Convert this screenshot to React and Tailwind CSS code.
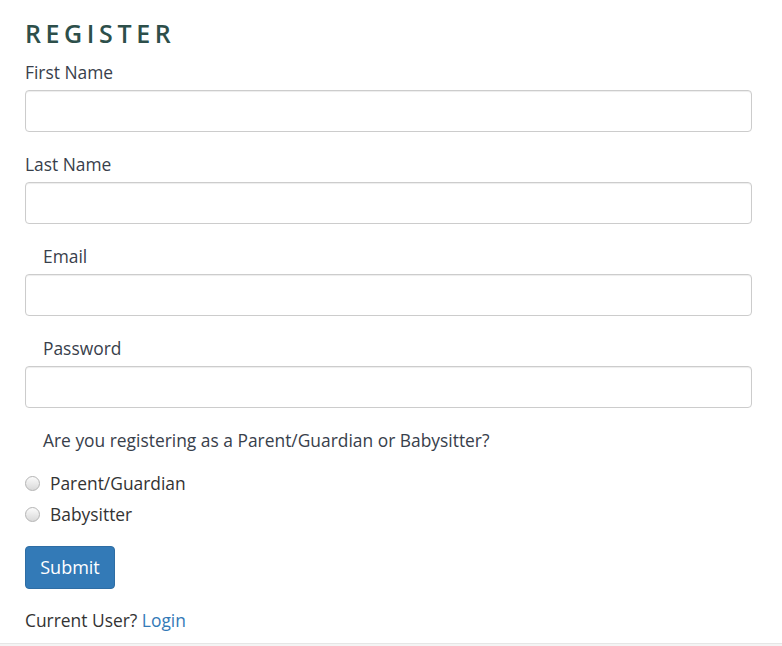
import React, { useState } from "react";

const Field = ({ label, type = "text", indent }) => (
  <div className="mb-5">
    <label className={`block h-6 leading-6 mb-[6px] text-[#38404b] ${indent ? "pl-[18px]" : ""}`}>{label}</label>
    <input
      type={type}
      className="block w-[727px] h-[42px] rounded border border-[#cccccc] bg-white px-3 shadow-[inset_0_1px_1px_rgba(0,0,0,0.075)] focus:outline-none"
    />
  </div>
);

const Radio = ({ label, checked, onClick }) => (
  <label className="flex items-center h-6 cursor-pointer" onClick={onClick}>
    <span className="w-[15px] h-[15px] rounded-full border border-[#b4b4b4] bg-gradient-to-b from-[#fbfbfb] to-[#d9d9d9] flex items-center justify-center">
      {checked && <span className="w-[7px] h-[7px] rounded-full bg-[#444]" />}
    </span>
    <span className="ml-[10px]">{label}</span>
  </label>
);

export default function App() {
  const [role, setRole] = useState("");

  return (
    <div
      className="min-h-[646px] bg-white text-[17.4px] text-[#333333]"
      style={{ fontFamily: '"Open Sans", "Liberation Sans", sans-serif' }}
    >
      <div className="px-[25px] pt-[17px]">
        <h1 className="h-8 leading-8 text-[25px] font-semibold tracking-[4.6px] text-[#2d4f4a] mb-[11px]">REGISTER</h1>

        <Field label="First Name" />
        <Field label="Last Name" />
        <Field label="Email" type="email" indent />
        <Field label="Password" type="password" indent />

        <p className="h-6 leading-6 pl-[18px] text-[#38404b]">Are you registering as a Parent/Guardian or Babysitter?</p>

        <div className="mt-[19px] flex flex-col gap-[7px]">
          <Radio label="Parent/Guardian" checked={role === "parent"} onClick={() => setRole("parent")} />
          <Radio label="Babysitter" checked={role === "sitter"} onClick={() => setRole("sitter")} />
        </div>

        <button className="mt-5 h-[43px] w-[90px] rounded bg-[#337ab7] text-[18px] text-white border border-[#2e6da4]">
          Submit
        </button>

        <p className="mt-[19px] h-6 leading-6">
          Current User? <a href="#" className="text-[#337ab7]">Login</a>
        </p>
      </div>
      <div className="mt-[11px] h-[3px] border-t border-[#e6e6e6] bg-[#f4f4f4]" />
    </div>
  );
}
